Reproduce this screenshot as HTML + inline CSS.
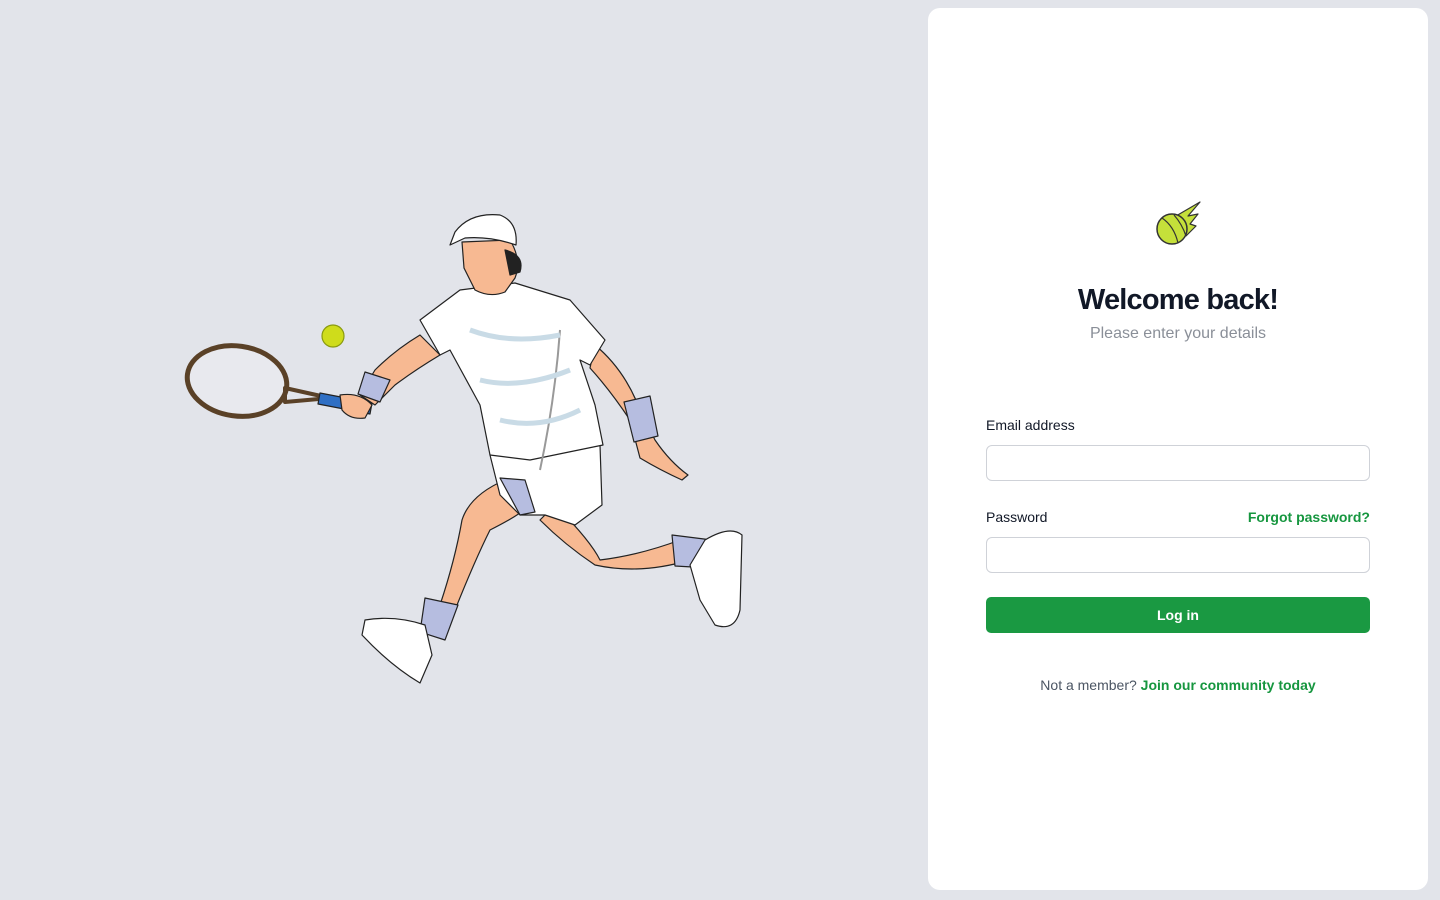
<!DOCTYPE html>
<html><head><meta charset="utf-8"><style>
*{box-sizing:border-box;margin:0;padding:0}
body{width:1440px;height:900px;background:#e2e4ea;font-family:"Liberation Sans",Arial,sans-serif;position:relative;overflow:hidden}
.card{position:absolute;left:928px;top:8px;width:500px;height:882px;background:#fff;border-radius:12px}
h1{position:absolute;left:0;width:100%;top:276px;text-align:center;font-size:29px;font-weight:700;color:#111827;letter-spacing:-0.8px}
.sub{position:absolute;left:0;width:100%;top:317px;text-align:center;font-size:16px;color:#8a8f98}
.lbl{position:absolute;left:58px;font-size:14px;color:#111827}
.inp{position:absolute;left:58px;width:384px;height:36px;border:1px solid #cfd2d8;border-radius:6px;background:#fff}
.fg{position:absolute;right:58px;top:501px;font-size:14px;font-weight:700;color:#16963f}
.btn{position:absolute;left:58px;top:589px;width:384px;height:36px;background:#1a9942;border-radius:5px;color:#fff;font-weight:700;font-size:14px;text-align:center;line-height:36px}
.foot{position:absolute;left:0;width:100%;top:669px;text-align:center;font-size:14px;color:#4b5563}
.foot b{color:#16963f}
</style></head><body>
<svg width="900" height="900" style="position:absolute;left:0;top:0" viewBox="0 0 900 900">
<g stroke="#222" stroke-width="1.2" stroke-linejoin="round">
<ellipse cx="237" cy="381" rx="50" ry="35" transform="rotate(8 237 381)" fill="#e8e9ee" stroke="#5a4127" stroke-width="5"/>
<path d="M285 388 L330 398 L285 402 Z" fill="none" stroke="#5a4127" stroke-width="4"/>
<path d="M320 393 L372 403 L370 414 L318 404 Z" fill="#2f6fc4"/>
<circle cx="333" cy="336" r="11" fill="#cfdc1b" stroke="#8a9a10"/>
<path d="M595 345 Q625 370 640 410 L655 440 Q670 462 688 475 L682 480 Q660 470 640 458 L630 420 Q610 390 590 368 Z" fill="#f7b992"/>
<path d="M624 402 L650 396 L658 436 L634 442 Z" fill="#b6bde0"/>
<path d="M555 505 Q590 540 600 560 Q640 555 680 540 L690 560 Q640 575 595 565 Q565 545 540 520 Z" fill="#f7b992"/>
<path d="M672 535 L712 540 L710 568 L675 566 Z" fill="#b6bde0"/>
<path d="M705 540 Q730 525 742 535 L740 610 Q735 632 715 625 L700 600 L690 565 Z" fill="#fff"/>
<path d="M505 480 Q470 495 462 520 Q455 560 440 605 L455 610 Q475 560 490 530 Q520 515 530 505 Z" fill="#f7b992"/>
<path d="M425 598 L458 605 L445 640 L420 632 Z" fill="#b6bde0"/>
<path d="M365 620 Q395 615 425 625 L432 655 L420 683 Q390 665 362 635 Z" fill="#fff"/>
<path d="M490 455 L600 445 L602 505 L575 525 L545 515 L520 515 L500 495 Z" fill="#fff"/>
<path d="M500 478 L525 480 L535 512 L520 515 Z" fill="#b6bde0"/>
<path d="M420 320 L460 290 L515 283 L570 300 L605 340 L590 365 L580 360 L595 405 L603 445 L530 460 L490 455 L480 405 L450 350 L440 355 Z" fill="#fff"/>
<path d="M560 330 Q555 400 540 470" fill="none" stroke="#999" stroke-width="2"/>
<path d="M470 330 Q510 345 560 335 M480 380 Q520 390 570 370 M500 420 Q540 430 580 410" fill="none" stroke="#c9dbe6" stroke-width="5"/>
<path d="M420 335 L440 355 Q415 370 395 385 L375 405 L360 395 L375 370 Q395 350 420 335 Z" fill="#f7b992"/>
<path d="M365 372 L390 380 L380 402 L358 394 Z" fill="#b6bde0"/>
<path d="M340 395 Q360 392 372 405 L365 418 Q350 420 342 410 Z" fill="#f7b992"/>
<path d="M462 242 L510 240 Q522 260 515 278 L505 292 Q490 298 475 290 L464 268 Z" fill="#f7b992"/>
<path d="M505 250 Q525 255 520 272 L510 275 Z" fill="#222"/>
<path d="M455 232 Q470 212 500 215 Q518 222 516 245 Q490 236 465 238 L450 245 Z" fill="#fff"/>
</g>
</svg>
<div class="card">
<svg width="52" height="52" viewBox="0 0 52 52" style="position:absolute;left:224px;top:192px">
<path d="M24 16 L48 2 L36 16 L46 14 L38 24 L44 26 L34 36 Z" fill="#c5e03a" stroke="#333" stroke-width="1.2" stroke-linejoin="round"/>
<circle cx="20" cy="29" r="15" fill="#c5e03a" stroke="#333" stroke-width="1.5"/>
<path d="M10 18 Q22 26 26 43 M22 15 Q30 24 34 36" fill="none" stroke="#333" stroke-width="1.2"/>
</svg>
<h1>Welcome back!</h1>
<div class="sub">Please enter your details</div>
<div class="lbl" style="top:409px">Email address</div>
<div class="inp" style="top:437px"></div>
<div class="lbl" style="top:501px">Password</div>
<div class="fg">Forgot password?</div>
<div class="inp" style="top:529px"></div>
<div class="btn">Log in</div>
<div class="foot">Not a member? <b>Join our community today</b></div>
</div>
</body></html>
